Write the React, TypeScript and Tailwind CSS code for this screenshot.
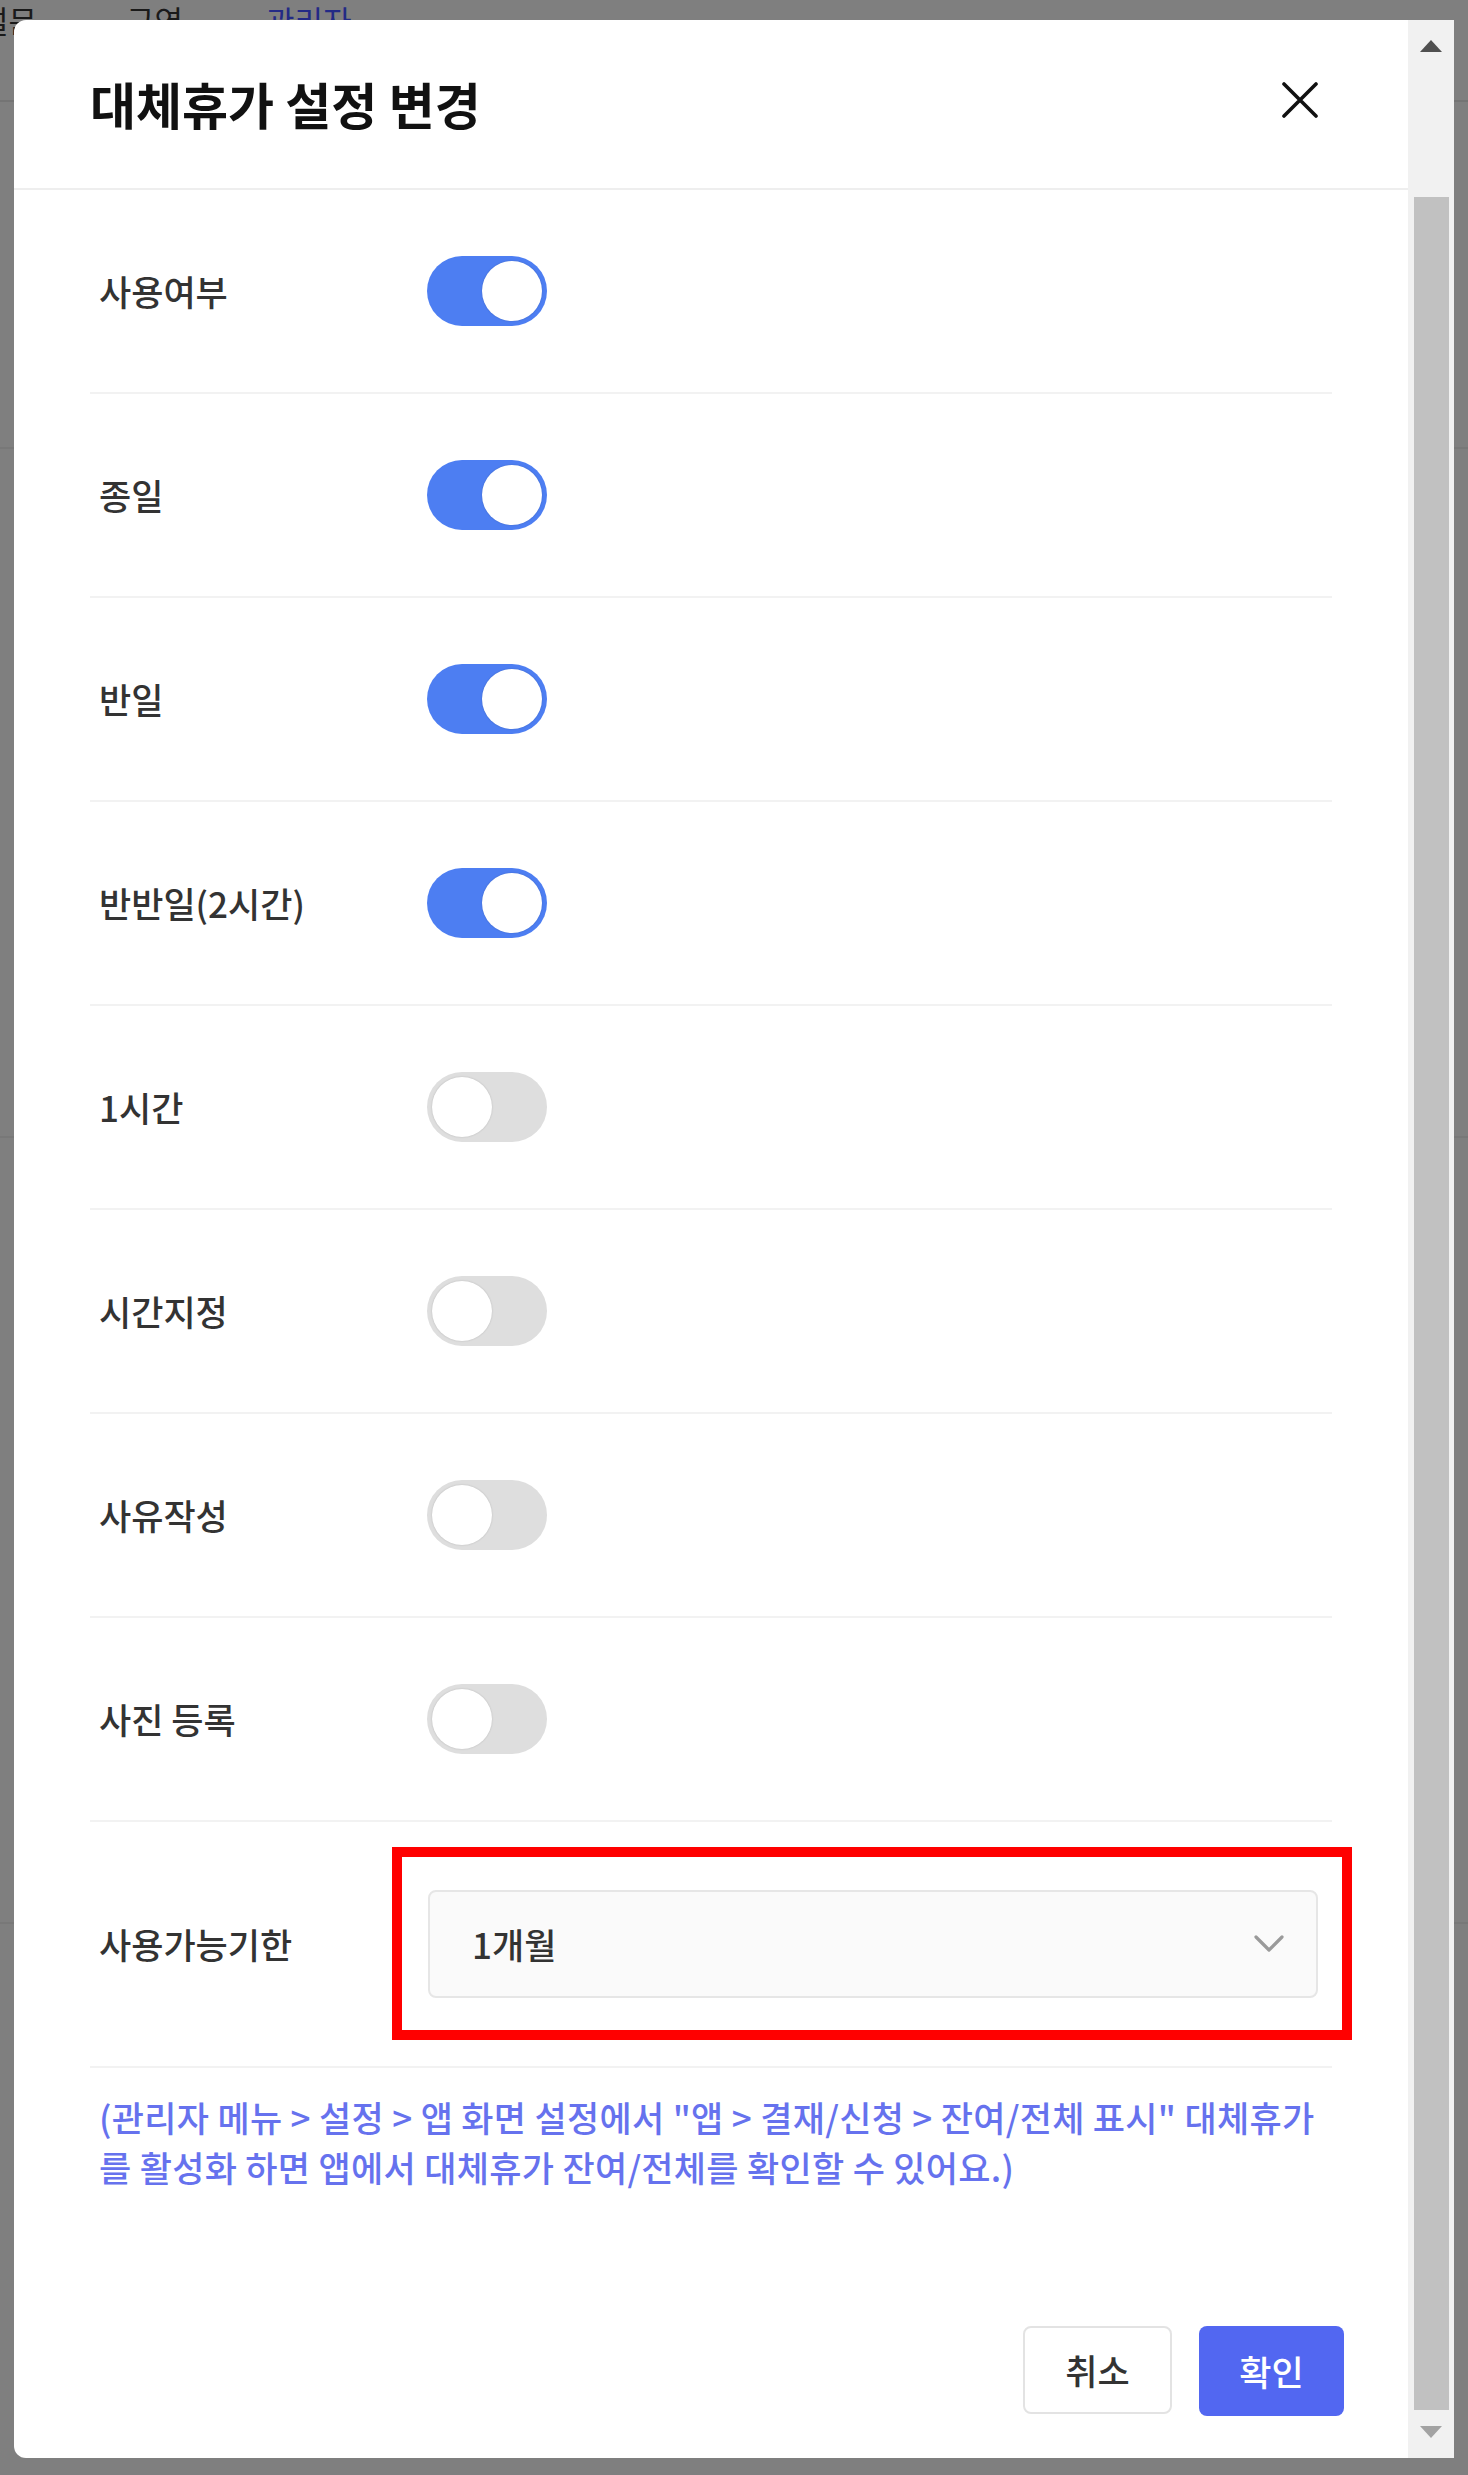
import React from 'react';

const rows = [
  { label: '사용여부', on: true },
  { label: '종일', on: true },
  { label: '반일', on: true },
  { label: '반반일(2시간)', on: true },
  { label: '1시간', on: false },
  { label: '시간지정', on: false },
  { label: '사유작성', on: false },
  { label: '사진 등록', on: false },
];

const Toggle = ({ on }: { on: boolean }) => (
  <div
    className={`flex h-[70px] w-[120px] items-center rounded-full p-[5px] ${
      on ? 'justify-end bg-[#4d7ef2]' : 'justify-start bg-[#dedede]'
    }`}
  >
    <div className="h-[60px] w-[60px] rounded-full bg-white shadow-[0_0_2px_rgba(0,0,0,0.18)]" />
  </div>
);

const App = () => {
  return (
    <div className="relative h-[2475px] w-[1468px] overflow-hidden bg-[#7f7f7f] pl-[14px] pt-[20px] font-['Noto_Sans_CJK_KR','Noto_Sans',sans-serif]">
      {/* page behind the dim overlay */}
      <span className="absolute left-[-20px] top-[4px] text-[31px] leading-none text-[#1a1a1a]">설문</span>
      <span className="absolute left-[126px] top-[4px] text-[31px] leading-none text-[#1a1a1a]">구역</span>
      <span className="absolute left-[266px] top-[4px] text-[31px] leading-none text-[#232a86]">관리자</span>
      <div className="absolute left-0 right-0 top-[100px] h-[2px] bg-[#747474]" />
      <div className="absolute left-0 right-0 top-[447px] h-[2px] bg-[#787878]" />
      <div className="absolute left-0 right-0 top-[1136px] h-[2px] bg-[#787878]" />
      <div className="absolute left-0 right-0 top-[1922px] h-[2px] bg-[#787878]" />

      <div className="relative flex h-[2438px] w-[1440px] overflow-hidden rounded-l-[12px] bg-white">
        <div className="flex flex-1 flex-col">
          <div className="flex h-[170px] items-center justify-between border-b-2 border-[#eeeeee] pl-[76px] pr-[78px]">
            <h1 className="mb-[2px] text-[50px] font-bold leading-none text-[#111111]">대체휴가 설정 변경</h1>
            <button className="mb-[8px] flex h-[60px] w-[60px] items-center justify-center">
              <svg width="36" height="36" viewBox="0 0 36 36">
                <path d="M2 2 L34 34 M34 2 L2 34" stroke="#111" strokeWidth="3.6" strokeLinecap="round" />
              </svg>
            </button>
          </div>

          <div className="px-[76px]">
            {rows.map((row) => (
              <div key={row.label} className="flex h-[204px] items-center border-b-2 border-[#f2f2f2]">
                <div className="w-[337px] pl-[9px] text-[35px] font-medium text-[#333333]">{row.label}</div>
                <Toggle on={row.on} />
              </div>
            ))}

            <div className="flex h-[246px] items-center border-b-2 border-[#f2f2f2]">
              <div className="w-[338px] pl-[9px] text-[35px] font-medium text-[#333333]">사용가능기한</div>
              <div className="relative">
                <span className="pointer-events-none absolute -bottom-[42px] -left-[36px] -right-[34px] -top-[43px] border-[10px] border-[#ff0000]" />
                <div className="flex h-[108px] w-[890px] items-center justify-between rounded-[8px] border-2 border-[#e6e6e6] bg-[#fafafa] pl-[42px] pr-[32px]">
                  <span className="text-[35px] font-medium text-[#333333]">1개월</span>
                  <svg width="30" height="19" viewBox="0 0 30 19">
                    <path d="M2 2 L15 15 L28 2" fill="none" stroke="#9a9a9a" strokeWidth="3.2" strokeLinecap="round" strokeLinejoin="round" />
                  </svg>
                </div>
              </div>
            </div>

            <p className="pl-[9px] pt-[24px] text-[35px] font-medium leading-[50px] tracking-[0.3px] text-[#6672ee]">
              (관리자 메뉴 &gt; 설정 &gt; 앱 화면 설정에서 "앱 &gt; 결재/신청 &gt; 잔여/전체 표시" 대체휴가
              <br />를 활성화 하면 앱에서 대체휴가 잔여/전체를 확인할 수 있어요.)
            </p>
          </div>

          <div className="mt-auto flex justify-end gap-[27px] pb-[42px] pr-[64px]">
            <button className="h-[88px] w-[149px] rounded-[8px] border-2 border-[#e3e3e3] bg-white text-[35px] font-medium text-[#333333]">
              취소
            </button>
            <button className="h-[90px] w-[145px] rounded-[8px] bg-[#5267f1] text-[35px] font-medium text-white">
              확인
            </button>
          </div>
        </div>

        <div className="flex w-[46px] flex-col items-center bg-[#f1f1f1]">
          <div className="flex h-[177px] w-full justify-center pt-[20px]">
            <svg width="22" height="12" viewBox="0 0 22 12">
              <path d="M11 0 L22 12 L0 12 Z" fill="#505050" />
            </svg>
          </div>
          <div className="w-[35px] flex-1 bg-[#c1c1c1]" />
          <div className="flex h-[48px] w-full justify-center pt-[16px]">
            <svg width="22" height="12" viewBox="0 0 22 12">
              <path d="M0 0 L22 0 L11 12 Z" fill="#a3a3a3" />
            </svg>
          </div>
        </div>
      </div>
    </div>
  );
};

export default App;
